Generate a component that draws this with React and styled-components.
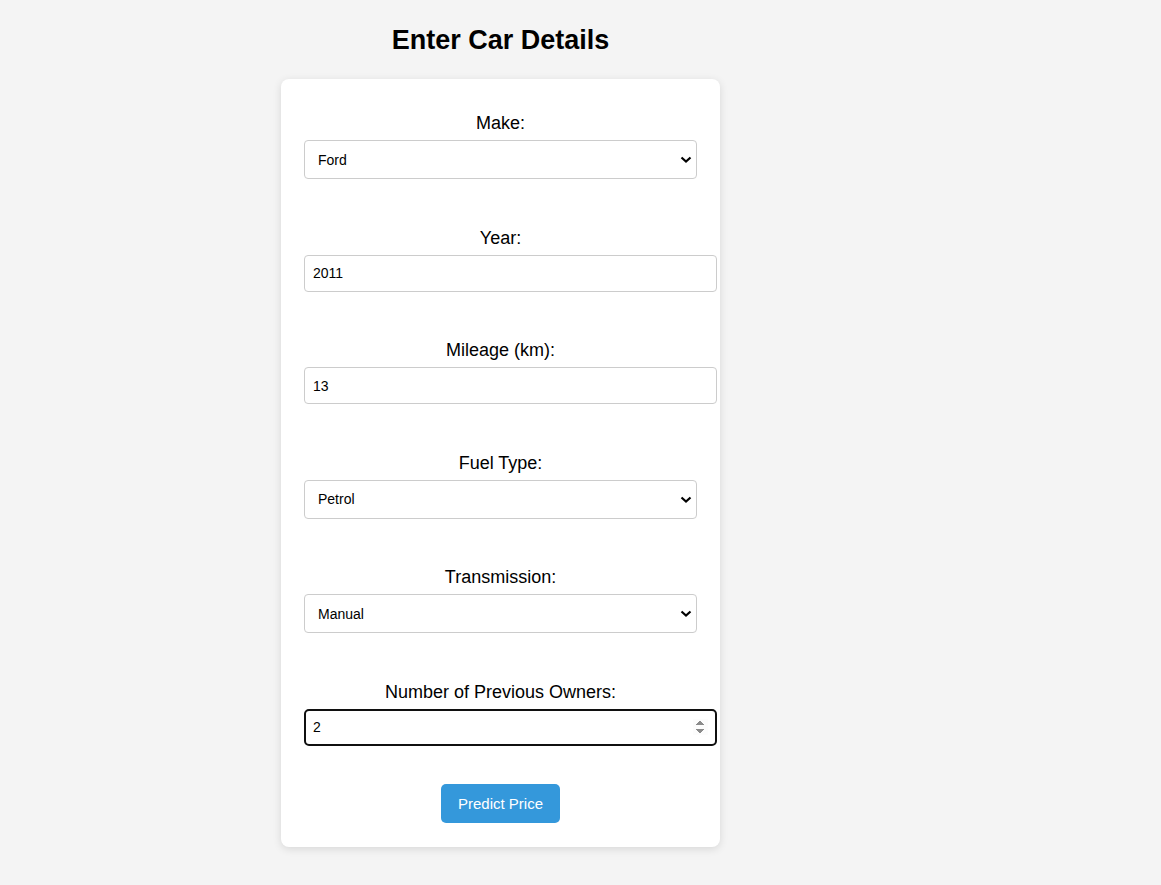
import React, { useState } from "react";
import styled, { createGlobalStyle } from "styled-components";

const GlobalStyle = createGlobalStyle`
  body {
    margin: 0;
    background-color: #f4f4f4;
    font-family: "Liberation Sans", Arial, sans-serif;
    color: #000;
  }
`;

const Page = styled.div`
  display: flex;
  flex-direction: column;
  align-items: center;
  width: 1001px;
  padding-bottom: 40px;
`;

const Title = styled.h2`
  margin: 24px 0 0;
  font-size: 27px;
  line-height: 32px;
  font-weight: bold;
`;

const Card = styled.form`
  box-sizing: border-box;
  width: 439px;
  margin-top: 23px;
  padding: 23.5px 23px 24px;
  background-color: #fff;
  border-radius: 8px;
  box-shadow: 0 2px 8px rgba(0, 0, 0, 0.12);
  display: flex;
  flex-direction: column;
`;

const Group = styled.div`
  display: flex;
  flex-direction: column;
  margin-bottom: 38px;
`;

const Label = styled.label`
  margin-top: 10.5px;
  margin-bottom: 6px;
  font-size: 18px;
  line-height: 21px;
  text-align: center;
`;

const SelectWrap = styled.div`
  position: relative;
  width: 393px;
`;

const Select = styled.select`
  box-sizing: border-box;
  width: 100%;
  height: 39px;
  padding: 0 30px 0 13px;
  font-family: "Liberation Sans", Arial, sans-serif;
  font-size: 14px;
  color: #000;
  background-color: #fff;
  border: 1px solid #ccc;
  border-radius: 4px;
  appearance: none;
  -webkit-appearance: none;
`;

const Chevron = styled.svg`
  position: absolute;
  right: 5px;
  top: 16px;
  width: 12px;
  height: 7px;
  pointer-events: none;
`;

const Input = styled.input`
  box-sizing: border-box;
  width: 413px;
  height: 37px;
  padding: 0 8px;
  font-family: "Liberation Sans", Arial, sans-serif;
  font-size: 14px;
  color: #000;
  border: 1px solid #ccc;
  border-radius: 4px;
`;

const Button = styled.button`
  align-self: center;
  height: 39px;
  padding: 0 17px;
  font-family: "Liberation Sans", Arial, sans-serif;
  font-size: 15px;
  color: #fff;
  background-color: #3498db;
  border: none;
  border-radius: 5px;
  cursor: pointer;
`;

const Dropdown = ({ id, value, onChange, options }) => (
  <SelectWrap>
    <Select id={id} value={value} onChange={onChange}>
      {options.map((o) => (
        <option key={o}>{o}</option>
      ))}
    </Select>
    <Chevron viewBox="0 0 12 7">
      <path d="M1.5 1.5 L6 5.5 L10.5 1.5" fill="none" stroke="#000" strokeWidth="2.2" />
    </Chevron>
  </SelectWrap>
);

const App = () => {
  const [make, setMake] = useState("Ford");
  const [year, setYear] = useState("2011");
  const [mileage, setMileage] = useState("13");
  const [fuel, setFuel] = useState("Petrol");
  const [transmission, setTransmission] = useState("Manual");
  const [owners, setOwners] = useState("2");

  return (
    <Page>
      <GlobalStyle />
      <Title>Enter Car Details</Title>
      <Card onSubmit={(e) => e.preventDefault()}>
        <Group>
          <Label htmlFor="make">Make:</Label>
          <Dropdown
            id="make"
            value={make}
            onChange={(e) => setMake(e.target.value)}
            options={["Toyota", "Honda", "Ford", "BMW"]}
          />
        </Group>
        <Group>
          <Label htmlFor="year">Year:</Label>
          <Input id="year" type="text" value={year} onChange={(e) => setYear(e.target.value)} />
        </Group>
        <Group>
          <Label htmlFor="mileage">Mileage (km):</Label>
          <Input id="mileage" type="text" value={mileage} onChange={(e) => setMileage(e.target.value)} />
        </Group>
        <Group>
          <Label htmlFor="fuel">Fuel Type:</Label>
          <Dropdown
            id="fuel"
            value={fuel}
            onChange={(e) => setFuel(e.target.value)}
            options={["Petrol", "Diesel", "Electric"]}
          />
        </Group>
        <Group>
          <Label htmlFor="transmission">Transmission:</Label>
          <Dropdown
            id="transmission"
            value={transmission}
            onChange={(e) => setTransmission(e.target.value)}
            options={["Manual", "Automatic"]}
          />
        </Group>
        <Group>
          <Label htmlFor="owners">Number of Previous Owners:</Label>
          <Input
            id="owners"
            type="number"
            autoFocus
            value={owners}
            onChange={(e) => setOwners(e.target.value)}
          />
        </Group>
        <Button type="submit">Predict Price</Button>
      </Card>
    </Page>
  );
};

export default App;
